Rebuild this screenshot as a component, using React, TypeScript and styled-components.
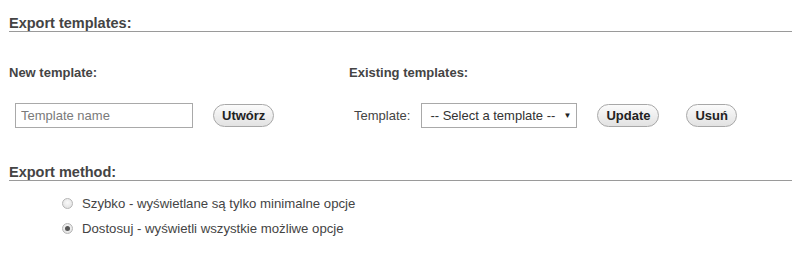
import React from "react";
import styled, { createGlobalStyle } from "styled-components";

const GlobalStyle = createGlobalStyle`
  html, body {
    margin: 0;
    padding: 0;
    background: #fff;
    font-family: "Liberation Sans", Arial, sans-serif;
    color: #444;
  }
`;

const Page = styled.div`
  display: flow-root;
  width: 807px;
  height: 258px;
  box-sizing: border-box;
  padding: 0 15px 0 9px;
  overflow: hidden;
`;

const SectionTitle = styled.div<{ $top: number }>`
  margin-top: ${(p) => p.$top}px;
  font-size: 14.5px;
  font-weight: bold;
  line-height: 16px;
  color: #444;
  border-bottom: 1px solid #9a9a9a;
`;

const Columns = styled.div`
  display: flex;
  margin-top: 33px;
`;

const Column = styled.div<{ $width?: number }>`
  width: ${(p) => (p.$width ? `${p.$width}px` : "auto")};
  flex: ${(p) => (p.$width ? "none" : "1")};
`;

const SubTitle = styled.div`
  font-size: 13px;
  font-weight: bold;
  line-height: 15px;
  color: #444;
`;

const ControlRow = styled.div<{ $indent: number }>`
  display: flex;
  align-items: center;
  margin-top: 23px;
  padding-left: ${(p) => p.$indent}px;
  height: 25px;
`;

const TextInput = styled.input`
  box-sizing: border-box;
  width: 178px;
  height: 25px;
  border: 1px solid #a9a9a9;
  padding: 0 5px;
  font-family: "Liberation Sans", Arial, sans-serif;
  font-size: 13px;
  color: #333;
  outline: none;
  &::placeholder {
    color: #7a7a7a;
  }
`;

const PillButton = styled.button<{ $gap: number }>`
  margin-left: ${(p) => p.$gap}px;
  box-sizing: border-box;
  height: 23px;
  padding: 0 8px;
  border: 1px solid #a8a8a8;
  border-radius: 12px;
  background: linear-gradient(#fbfbfb, #e2e2e2);
  font-family: "Liberation Sans", Arial, sans-serif;
  font-size: 13px;
  font-weight: bold;
  color: #222;
  cursor: pointer;
`;

const Label = styled.span`
  font-size: 13px;
  color: #444;
  margin-right: 11px;
`;

const SelectBox = styled.div`
  box-sizing: border-box;
  display: flex;
  align-items: center;
  width: 156px;
  height: 25px;
  border: 1px solid #a9a9a9;
  background: #fff;
`;

const NativeSelect = styled.select`
  flex: 1;
  appearance: none;
  border: none;
  background: transparent;
  padding: 0 0 0 8px;
  font-family: "Liberation Sans", Arial, sans-serif;
  font-size: 13px;
  color: #333;
  outline: none;
`;

const Arrow = styled.span`
  font-size: 8px;
  color: #222;
  margin-right: 5px;
`;

const RadioList = styled.div`
  margin-top: 10px;
  padding-left: 53px;
`;

const RadioRow = styled.label`
  display: flex;
  align-items: center;
  height: 25px;
  font-size: 13.2px;
  color: #444;
`;

const Radio = styled.input`
  appearance: none;
  margin: 0 9px 0 0;
  width: 11px;
  height: 11px;
  border-radius: 50%;
  border: 1px solid #b5b5b5;
  background: radial-gradient(circle at 50% 40%, #fafafa, #dcdcdc);
  box-sizing: border-box;
  position: relative;
  &:checked::after {
    content: "";
    position: absolute;
    left: 2px;
    top: 2px;
    width: 5px;
    height: 5px;
    border-radius: 50%;
    background: #555;
  }
`;

export default function App() {
  return (
    <Page>
      <GlobalStyle />
      <SectionTitle $top={15}>Export templates:</SectionTitle>
      <Columns>
        <Column $width={340}>
          <SubTitle>New template:</SubTitle>
          <ControlRow $indent={6}>
            <TextInput placeholder="Template name" />
            <PillButton $gap={20}>Utwórz</PillButton>
          </ControlRow>
        </Column>
        <Column>
          <SubTitle>Existing templates:</SubTitle>
          <ControlRow $indent={5}>
            <Label>Template:</Label>
            <SelectBox>
              <NativeSelect defaultValue="">
                <option value="">-- Select a template --</option>
              </NativeSelect>
              <Arrow>▼</Arrow>
            </SelectBox>
            <PillButton $gap={20}>Update</PillButton>
            <PillButton $gap={27}>Usuń</PillButton>
          </ControlRow>
        </Column>
      </Columns>
      <SectionTitle $top={36}>Export method:</SectionTitle>
      <RadioList>
        <RadioRow>
          <Radio type="radio" name="method" />
          Szybko - wyświetlane są tylko minimalne opcje
        </RadioRow>
        <RadioRow>
          <Radio type="radio" name="method" defaultChecked />
          Dostosuj - wyświetli wszystkie możliwe opcje
        </RadioRow>
      </RadioList>
    </Page>
  );
}
